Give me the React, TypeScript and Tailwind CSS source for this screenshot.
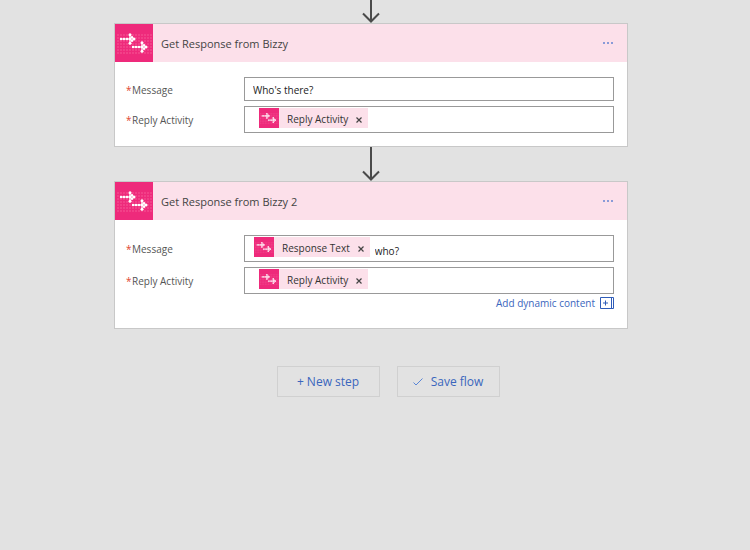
import React from 'react';

interface Token {
  label: string;
  text?: string;
}

interface FieldProps {
  id: string;
  label: string;
  value?: string;
  token?: Token;
  inset?: string;
}

const GRID_X = [2, 5, 8, 11, 14, 17, 20, 23, 26, 29, 32, 35];
const GRID_Y = [10, 13, 16, 19, 22, 25, 28];

const LogoArrow: React.FC<{ x: number; y: number }> = ({ x, y }) => (
  <g transform={`translate(${x} ${y})`} fill="#fff">
    <path d="M0 0H13M9 -4V4" stroke="#fff" strokeWidth="1.2" />
    <circle cx="0" cy="0" r="1.2" />
    <circle cx="3" cy="0" r="1.2" />
    <circle cx="6" cy="0" r="1.2" />
    <circle cx="9" cy="0" r="1.4" />
    <circle cx="13" cy="0" r="1.5" />
    <circle cx="9" cy="-4.2" r="1.5" />
    <circle cx="9" cy="4.2" r="1.5" />
    <circle cx="11" cy="-1.8" r="1.2" />
    <circle cx="11" cy="1.8" r="1.2" />
  </g>
);

const BizzyLogo: React.FC<{ className: string }> = ({ className }) => (
  <svg viewBox="0 0 38 38" className={`shrink-0 bg-[#ee2a7b] ${className}`} aria-hidden="true">
    {GRID_Y.map((y) => GRID_X.map((x) => (
      <rect key={`${x}_${y}`} x={x} y={y} width="2" height="2" fill="#f8629d" opacity="0.4" />
    )))}
    <LogoArrow x={6} y={15} />
    <LogoArrow x={18} y={23} />
  </svg>
);

const Chip: React.FC<{ label: string }> = ({ label }) => (
  <span className="flex h-5 shrink-0 items-center bg-[#fce0ea] text-[#333]">
    <BizzyLogo className="size-5" />
    <span className="pt-0.5 pr-2 pl-2 whitespace-nowrap">{label}</span>
    <button type="button" aria-label={`Remove ${label}`} className="flex h-5 items-center pt-1 pr-1.5">
      <svg viewBox="0 0 6 6" className="size-1.5" fill="none" stroke="#444" strokeWidth="1.2">
        <path d="M.5 .5l5 5M5.5 .5l-5 5" />
      </svg>
    </button>
  </span>
);

const Field: React.FC<FieldProps> = ({ id, label, value, token, inset = 'pl-[14px]' }) => (
  <div className="flex items-center">
    <label htmlFor={id} className="w-[118px] shrink-0 pt-0.5 text-[#555]">
      <span className="inline-block w-1.5 text-[#e0442e]">*</span>{label}
    </label>
    {token ? (
      <div className={`flex h-[27px] min-w-0 flex-1 items-start border border-[#999] bg-white pt-px ${inset}`}>
        <Chip label={token.label} />
        <input id={id} type="text" defaultValue={token.text} className="h-6 min-w-0 flex-1 bg-transparent pt-1 pl-[5px] text-[#222] outline-none" />
      </div>
    ) : (
      <input id={id} type="text" defaultValue={value} className="h-6 min-w-0 flex-1 border border-[#999] bg-white px-2 pt-0.5 text-[#222] outline-none" />
    )}
  </div>
);

const StepCard: React.FC<{ title: string; children: React.ReactNode }> = ({ title, children }) => (
  <section className="w-full max-w-[514px] border border-[#c8c8c8] bg-white">
    <header className="flex h-[38px] items-center bg-[#fce0ea]">
      <BizzyLogo className="size-[38px]" />
      <h2 className="flex-1 pt-0.5 pl-2 text-[11px] text-[#444]">{title}</h2>
      <button type="button" aria-label="More options" className="mr-[13px] flex h-5 items-center">
        <svg viewBox="0 0 11 2" className="h-0.5 w-[11px]" fill="#8a9bd8">
          <rect x="0" width="2" height="2" />
          <rect x="4" width="2" height="2" />
          <rect x="8" width="2" height="2" />
        </svg>
      </button>
    </header>
    <div className="flex flex-col gap-[5px] pt-[15px] pr-[13px] pb-[13px] pl-[11px] text-[10px]">
      {children}
    </div>
  </section>
);

const App: React.FC = () => {
  return (
    <main className="flex min-h-screen flex-col items-center bg-[#e2e2e2] pr-2 font-['Open_Sans','Noto_Sans',sans-serif]">
      <svg viewBox="0 0 18 23" className="h-[23px] w-[18px]" fill="none" stroke="#4a4a4a" strokeWidth="2">
        <path d="M9 0V22M1 13.5l8 8 8-8" />
      </svg>

      <StepCard title="Get Response from Bizzy">
        <Field id="message-1" label="Message" value="Who's there?" />
        <Field id="reply-1" label="Reply Activity" token={{ label: 'Reply Activity' }} />
      </StepCard>

      <svg viewBox="0 0 18 34" className="h-[34px] w-[18px]" fill="none" stroke="#4a4a4a" strokeWidth="2">
        <path d="M9 0V33M1 24.5l8 8 8-8" />
      </svg>

      <StepCard title="Get Response from Bizzy 2">
        <Field id="message-2" label="Message" token={{ label: 'Response Text', text: 'who?' }} inset="pl-[9px]" />
        <div>
          <Field id="reply-2" label="Reply Activity" token={{ label: 'Reply Activity' }} />
          <div className="mb-[3px] flex h-[18px] justify-end">
            <button type="button" className="flex items-center gap-[5px] text-[#3a66bd]">
              Add dynamic content
              <svg viewBox="0 0 14 12" className="h-3 w-3.5" fill="none" stroke="#2f5cb8">
                <path d="M.5 .5h13v11H.5zM11.5 .5v11M3 6h5M5.5 3.5v5" />
              </svg>
            </button>
          </div>
        </div>
      </StepCard>

      <div className="mt-[37px] flex gap-[17px] pl-[34px] text-[12px] text-[#3a66bd]">
        <button type="button" className="h-[31px] w-[103px] border border-[#d0d0d0]">+ New step</button>
        <button type="button" className="flex h-[31px] w-[103px] items-center justify-center gap-2 border border-[#d0d0d0]">
          <svg viewBox="0 0 10 8" className="h-2 w-2.5" fill="none" stroke="#5b86d6">
            <path d="M.5 4.5l2.5 2.5 6.5-6.5" />
          </svg>
          Save flow
        </button>
      </div>
    </main>
  );
};

export default App;
